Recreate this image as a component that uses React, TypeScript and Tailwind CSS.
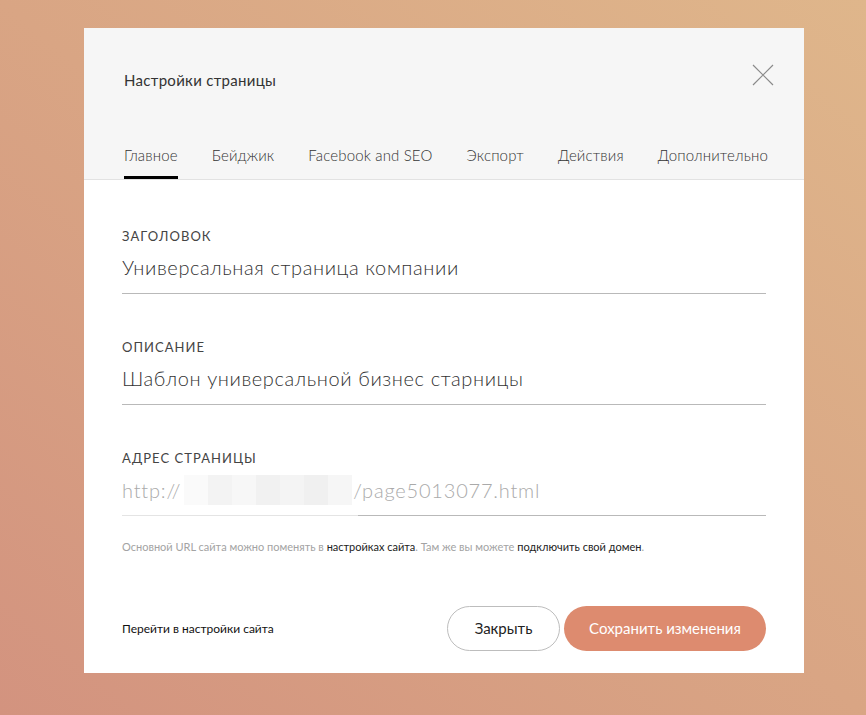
const tabs = ["Главное", "Бейджик", "Facebook and SEO", "Экспорт", "Действия", "Дополнительно"];

function Field({ label, value }: { label: string; value: string }) {
  return (
    <div className="pb-[45px]">
      <div className="text-[13px] leading-4 tracking-[0.08em] text-[#444]">{label}</div>
      <div className="mt-[9px] border-b border-[#b9b9b9] pb-[11px] text-[20px] leading-[29px] font-light tracking-[0.03em] text-[#333]">
        {value}
      </div>
    </div>
  );
}

export default function App() {
  return (
    <div
      className="min-h-[715px] w-full bg-gradient-to-bl from-[#dfb68b] via-[#d9a584] to-[#d3937f] pt-[28px] pl-[84px]"
      style={{ fontFamily: "Lato, 'Noto Sans', sans-serif" }}
    >
      <div className="w-[720px] h-[645px] bg-white flex flex-col">
        <div className="bg-[#f6f6f6] border-b border-[#e2e2e2] h-[152px] pl-[40px] pr-[36px] flex flex-col">
          <div className="flex items-start justify-between pt-[42px]">
            <div className="text-[15px] leading-5 tracking-[0.02em] text-[#333]">Настройки страницы</div>
            <button className="text-[#8a8a8a] -mt-[6px] -mr-[6px]">
              <svg width="22" height="22" viewBox="0 0 22 22" fill="none" stroke="currentColor" strokeWidth="1.2">
                <path d="M1 1L21 21M21 1L1 21" />
              </svg>
            </button>
          </div>
          <div className="mt-auto flex justify-between w-[644px] text-[15px] text-[#333] font-light tracking-[0.01em]">
            {tabs.map((t, i) => (
              <div
                key={t}
                className={`pb-[10px] border-b-[3px] ${i === 0 ? "border-black" : "border-transparent"}`}
              >
                {t}
              </div>
            ))}
          </div>
        </div>
        <div className="px-[38px] pt-[48px] flex-1 flex flex-col">
          <Field label="ЗАГОЛОВОК" value="Универсальная страница компании" />
          <Field label="ОПИСАНИЕ" value="Шаблон универсальной бизнес старницы" />
          <div>
            <div className="text-[13px] leading-4 tracking-[0.08em] text-[#444]">АДРЕС СТРАНИЦЫ</div>
            <div className="mt-[9px] flex items-center pb-[10px] text-[20px] leading-[29px] font-light tracking-[0.04em] text-[#aaa] border-b border-[#e4e4e4] relative">
              <span>http://</span>
              <span className="inline-grid grid-cols-7 w-[168px] h-[30px] ml-[3px] mr-[1px]">
                <span className="bg-[#fafafa]" />
                <span className="bg-[#f3f3f3]" />
                <span className="bg-[#f7f7f7]" />
                <span className="bg-[#f1f1f1]" />
                <span className="bg-[#f4f4f4]" />
                <span className="bg-[#f0f0f0]" />
                <span className="bg-[#f6f6f6]" />
              </span>
              <span>/page5013077.html</span>
              <span className="absolute left-[236px] right-0 -bottom-px h-px bg-[#b9b9b9]" />
            </div>
          </div>
          <div className="mt-[23px] text-[11px] text-[#a3a3a3]">
            Основной URL сайта можно поменять в <span className="text-[#222]">настройках сайта</span>. Там же вы можете{" "}
            <span className="text-[#222]">подключить свой домен</span>.
          </div>
          <div className="mt-auto mb-[22px] flex items-center">
            <div className="text-[12px] text-[#111]">Перейти в настройки сайта</div>
            <div className="ml-auto flex gap-[4px]">
              <button className="h-[45px] w-[113px] rounded-full border border-[#bdbdbd] bg-white text-[15px] text-[#222]">
                Закрыть
              </button>
              <button className="h-[45px] w-[202px] rounded-full bg-[#dd8b6f] text-[15px] text-white">
                Сохранить изменения
              </button>
            </div>
          </div>
        </div>
      </div>
    </div>
  );
}
